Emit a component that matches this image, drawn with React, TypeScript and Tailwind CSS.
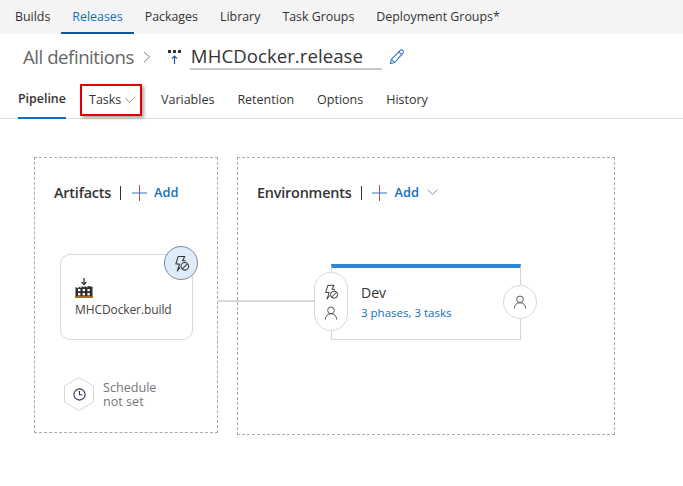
import React from "react";

const F = "font-['Open_Sans','Noto_Sans',sans-serif]";

function Bolt({ size = 18, color = "#333" }: { size?: number; color?: string }) {
  return (
    <svg width={size} height={size} viewBox="0 0 18 18" fill="none" stroke={color} strokeWidth="1.1">
      <path d="M5.5 1.5h7L10 6h3.5" strokeLinejoin="round" />
      <path d="M5.5 1.5L3 9.5h4L4.5 17l3-4" strokeLinejoin="round" />
      <circle cx="12.5" cy="12" r="4" />
      <path d="M9.8 14.7l5.4-5.4" />
    </svg>
  );
}

function Person({ size = 16, color = "#444" }: { size?: number; color?: string }) {
  return (
    <svg width={size} height={size} viewBox="0 0 16 16" fill="none" stroke={color} strokeWidth="1">
      <circle cx="8" cy="5" r="3.8" />
      <path d="M1.5 15.5c0-3.8 2.6-6.7 6.5-6.7s6.5 2.9 6.5 6.7" />
    </svg>
  );
}

function Plus() {
  return (
    <svg width="15" height="16" viewBox="0 0 15 16" strokeWidth="1">
      <path d="M0 8h15" stroke="#2277cc" />
      <path d="M7.5 0v16" stroke="#b4506f" />
    </svg>
  );
}

function Chevron({ w = 10, color = "#777" }: { w?: number; color?: string }) {
  return (
    <svg width={w} height={w * 0.6} viewBox="0 0 10 6" fill="none" stroke={color} strokeWidth="0.9">
      <path d="M0.5 0.5L5 5l4.5-4.5" />
    </svg>
  );
}

function ReleaseIcon() {
  return (
    <svg width="14" height="14" viewBox="0 0 14 14">
      <rect x="0" y="0" width="3" height="3" fill="#333" />
      <rect x="5" y="0" width="3" height="3" fill="#333" />
      <rect x="10" y="0" width="3" height="3" fill="#333" />
      <path d="M6.5 14V6M4 8.5l2.5-2.5L9 8.5" fill="none" stroke="#1f5f9e" strokeWidth="1.2" />
    </svg>
  );
}

function BuildIcon() {
  return (
    <svg width="18" height="20" viewBox="0 0 18 20">
      <path d="M9 0v6M6.5 4L9 6.5 11.5 4" fill="none" stroke="#333" strokeWidth="1.3" />
      <path d="M0.5 19V9l3 1.5V8.5l3 1.5V8l3 1.5V8l3 1.5V8l5 .8V19z" fill="#2c2c2c" />
      <rect x="0" y="18" width="18" height="2" fill="#a5692b" />
      <rect x="3" y="11" width="2.4" height="2.2" fill="#fff" />
      <rect x="7.6" y="11" width="2.4" height="2.2" fill="#fff" />
      <rect x="12.4" y="11" width="2.4" height="2.2" fill="#fff" />
      <rect x="3" y="15" width="2.4" height="2.4" fill="#fff" />
      <rect x="7.6" y="15" width="2.4" height="2.4" fill="#fff" />
      <rect x="12.4" y="15" width="2.4" height="2.4" fill="#fff" />
    </svg>
  );
}

function Hexagon() {
  return (
    <div className="relative w-[30px] h-[34px] flex items-center justify-center">
      <svg className="absolute inset-0" width="30" height="34" viewBox="0 0 30 34" fill="#fff" stroke="#d6d6d6">
        <path d="M15 .5L29.5 9v16L15 33.5.5 25V9z" />
      </svg>
      <svg className="relative" width="13" height="13" viewBox="0 0 13 13" fill="none" stroke="#333" strokeWidth="1.1">
        <circle cx="6.5" cy="6.5" r="5.6" stroke="#2b3a55" />
        <path d="M6.5 3v3.7h3" />
      </svg>
    </div>
  );
}

function TopItem({ label, active }: { label: string; active?: boolean }) {
  return (
    <div className={`h-full px-[11px] flex items-center border-b-2 ${active ? "border-[#0a5a9c] text-[#106ebe]" : "border-transparent text-[#333]"}`}>
      <span className="relative top-[1px]">{label}</span>
    </div>
  );
}

export default function App() {
  return (
    <div className={`${F} w-[683px] h-[486px] bg-white overflow-hidden text-[#333]`}>
      <nav className="h-[34px] bg-[#f4f4f4] flex pl-[4px] text-[12.4px]">
        <TopItem label="Builds" />
        <TopItem label="Releases" active />
        <TopItem label="Packages" />
        <TopItem label="Library" />
        <TopItem label="Task Groups" />
        <TopItem label="Deployment Groups*" />
      </nav>

      <div className="h-[44px] flex items-center pl-[23px] pt-[2px]">
        <span className="text-[18.6px] text-[#666] tracking-[-0.45px]">All definitions</span>
        <svg className="ml-[9px]" width="8" height="12" viewBox="0 0 8 12" fill="none" stroke="#888" strokeWidth="1">
          <path d="M1 1l5.5 5L1 11" />
        </svg>
        <span className="ml-[17px] flex"><ReleaseIcon /></span>
        <div className="ml-[8px] w-[192px] h-[26px] border-b-2 border-[#c8c8c8] text-[18.6px] leading-[24px] pl-[1px] text-[#333] tracking-[0.05px]">MHCDocker.release</div>
        <svg className="ml-[7px]" width="16" height="16" viewBox="0 0 17 17" fill="none" stroke="#2f72c4" strokeWidth="1.1">
          <path d="M1.5 15.5l1-4.5L12 1.5c1-.9 2-.9 2.8 0s.9 1.9 0 2.8L6 14.5z" />
          <path d="M10.5 3l3.5 3.5M2.5 11L6 14.5" />
        </svg>
      </div>

      <div className="h-[41px] border-b border-[#dcdcdc] flex pl-[18px] text-[12.5px]">
        <div className="h-[41px] w-[48px] border-b-2 border-[#106ebe] flex items-center font-semibold text-[12.4px] text-[#333] pt-[3px] whitespace-nowrap">Pipeline</div>
        <div className="relative ml-[23px] w-[72px] flex items-center gap-[4px] pt-[5px]">
          <span>Tasks</span>
          <Chevron w={9} />
          <div className="absolute left-[-9px] top-[6px] w-[62px] h-[32px] border-2 border-[#e00000] shadow-[2px_2px_3px_rgba(0,0,0,0.35)]" />
        </div>
        <div className="flex items-center pt-[5px]">Variables</div>
        <div className="flex items-center pt-[5px] ml-[23px]">Retention</div>
        <div className="flex items-center pt-[5px] ml-[23px]">Options</div>
        <div className="flex items-center pt-[5px] ml-[23px]">History</div>
      </div>

      <div className="flex items-start pl-[34px] pt-[38px]">
        <section className="relative w-[184px] h-[276px] border border-dashed border-[#aaaaaa]">
          <div className="flex items-center pl-[19px] pt-[24px] h-[45px]">
            <h2 className="text-[14.4px] font-semibold text-[#333] tracking-[-0.2px]">Artifacts</h2>
            <span className="ml-[9px] w-px h-[14px] bg-[#333]" />
            <span className="ml-[11px] flex"><Plus /></span>
            <span className="ml-[7px] text-[12.8px] font-semibold text-[#106ebe]">Add</span>
          </div>

          <div className="relative ml-[25px] mt-[51px] w-[133px] h-[86px] border border-[#d8d8d8] rounded-[10px] bg-white pl-[14px] pt-[23px]">
            <BuildIcon />
            <div className="mt-[4px] text-[12px] leading-[16px] text-[#444] tracking-[-0.1px]">MHCDocker.build</div>
            <div className="absolute right-[-6px] top-[-9px] w-[34px] h-[34px] rounded-full bg-[#deebf8] border border-[#7f8a96] flex items-center justify-center">
              <Bolt size={17} />
            </div>
            <div className="absolute left-[156px] top-[45px] w-[98px] h-[2px] bg-[#d8d8d8]" />
          </div>

          <div className="flex items-center ml-[29px] mt-[37px]">
            <Hexagon />
            <div className="ml-[9px] pt-[1px] text-[12.6px] leading-[14px] text-[#777]">
              Schedule<br />not set
            </div>
          </div>
        </section>

        <section className="relative ml-[19px] w-[378px] h-[278px] border border-dashed border-[#aaaaaa]">
          <div className="flex items-center pl-[19px] pt-[24px] h-[45px]">
            <h2 className="text-[14.4px] font-semibold text-[#333] tracking-[-0.2px]">Environments</h2>
            <span className="ml-[10px] w-px h-[14px] bg-[#333]" />
            <span className="ml-[10px] flex"><Plus /></span>
            <span className="ml-[7px] text-[12.8px] font-semibold text-[#106ebe]">Add</span>
            <span className="ml-[8px] flex"><Chevron w={11} color="#6a9bd0" /></span>
          </div>

          <div className="relative ml-[93px] mt-[61px] w-[190px] h-[76px] border-x border-b border-[#d4d4d4] border-t-4 border-t-[#2b88d8] pl-[29px] pt-[15px]">
            <div className="text-[14px] leading-[20px] text-[#333]">Dev</div>
            <div className="mt-[2px] text-[11.5px] leading-[16px] text-[#106ebe]">3 phases, 3 tasks</div>

            <div className="absolute left-[-18px] top-[4px] w-[34px] h-[59px] rounded-[17px] border border-[#d8d8d8] bg-white flex flex-col items-center justify-center gap-[6px]">
              <Bolt size={16} />
              <Person size={14} />
            </div>
            <div className="absolute right-[-17px] top-[17px] w-[34px] h-[34px] rounded-full border border-[#d8d8d8] bg-white flex items-center justify-center">
              <Person size={14} />
            </div>
          </div>
        </section>
      </div>
    </div>
  );
}
